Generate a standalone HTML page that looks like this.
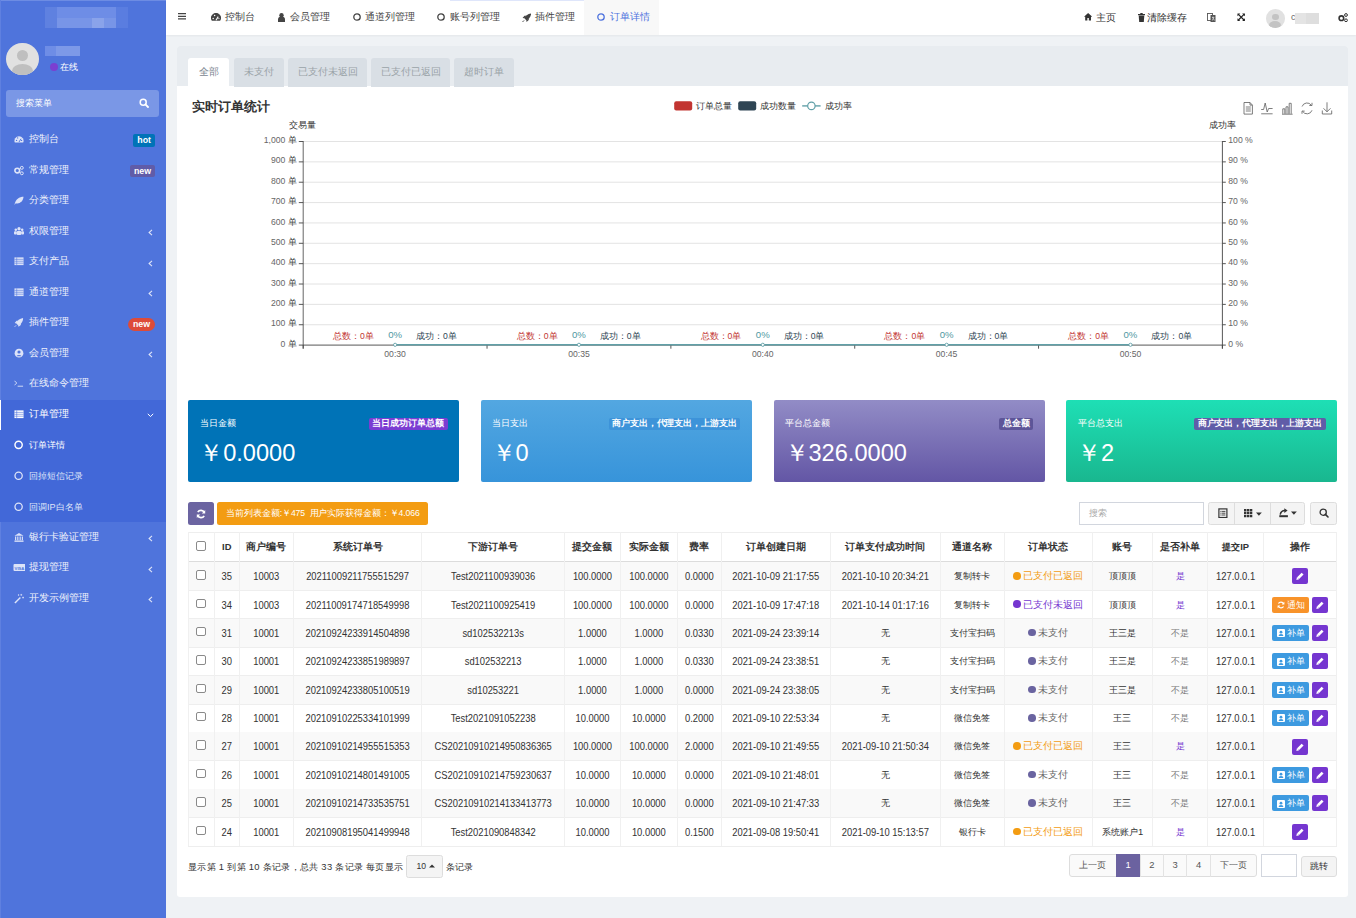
<!DOCTYPE html>
<html><head><meta charset="utf-8"><title>订单详情</title>
<style>
*{box-sizing:border-box;margin:0;padding:0}
html,body{width:1356px;height:918px;overflow:hidden}
body{position:relative;background:#eff2f5;font-family:"Liberation Sans",sans-serif;color:#333;font-size:9.4px}
.abs{position:absolute}
/* sidebar */
#side{left:0;top:0;width:166px;height:918px;background:#4f74dc}
.mos{position:absolute}
.menu .it{position:absolute;left:0;width:166px;height:30.5px;color:#eef1fb;font-size:9.5px;line-height:30.5px}
.menu .it .ic{position:absolute;left:14.3px;top:0.2px;width:10px;height:30.5px}
.menu .it .tx{position:absolute;left:29px;top:0}
.menu .it .chev{position:absolute;left:147.5px;top:2px;font-size:11px;color:#e3e8f8}
.badge{position:absolute;right:11px;top:10px;height:12.2px;line-height:12.2px;padding:0 4px;border-radius:2px;font-weight:bold;color:#fff;font-size:8.8px}
/* navbar */
#nav{left:166px;top:0;width:1190px;height:34.6px;background:#fff;box-shadow:0 1px 2px rgba(0,0,0,.05)}
.ni{position:absolute;top:0;height:35px;line-height:34px;font-size:9.5px;color:#444;white-space:nowrap}
.tab{position:absolute;top:58px;height:28.5px;line-height:28.3px;text-align:center;background:#d9dfe5;color:#99a3a8;font-size:9.7px;border-radius:3px 3px 0 0}
.tab.act{background:#fff;color:#7b8590}
.card{position:absolute;top:400.4px;width:271px;height:82px;border-radius:2px;color:#fff}
.card .cl{position:absolute;left:11.5px;top:16.5px;font-size:8.64px;line-height:13px}
.card .cb{position:absolute;right:11.5px;top:18px;height:11.8px;line-height:11.8px;padding:0 3.5px;font-size:8.64px;font-weight:bold;border-radius:2px}
.card .cv{position:absolute;left:11px;top:38px;font-size:23.6px;line-height:30px}
.td{position:absolute;text-align:center;white-space:nowrap;font-size:9.4px;color:#333}
.lt{display:inline-block;transform:translateY(0.8px) scaleY(1.17)}
.cbx{position:absolute;width:9.6px;height:9.4px;border:1px solid #8a8a8a;border-radius:2px;background:#fff}
.dot{display:inline-block;width:7.6px;height:7.6px;border-radius:50%;margin-right:2.5px;vertical-align:-0.5px}
.ebtn{position:absolute;width:16px;height:16px;background:#7536d0;border-radius:2px}
.ebtn svg{position:absolute;left:0;top:0}
.nbtn{position:absolute;width:36.5px;height:16px;border-radius:2px;color:#fff;font-size:9px;line-height:16px}
</style></head><body>

<!-- SIDEBAR -->
<div id="side" class="abs">
  <div class="abs" style="left:0;top:0;width:166px;height:1px;background:#6d8ce3"></div>
  <div class="abs" style="left:0;top:0;width:1px;height:918px;background:#5f80e0"></div>
  <!-- mosaic logo -->
  <div class="mos" style="left:45px;top:7px;width:83px;height:21px;background:#5f81e0"></div>
  <div class="mos" style="left:57px;top:7px;width:59px;height:11px;background:#6e8de6"></div>
  <div class="mos" style="left:57px;top:18px;width:59px;height:10px;background:#7895e7"></div>
  <div class="mos" style="left:92px;top:18px;width:12px;height:10px;background:#8aa3ea"></div>
  <div class="mos" style="left:116px;top:7px;width:12px;height:21px;background:#5a7de0"></div>
  <!-- user -->
  <div class="abs" style="left:6px;top:42.5px;width:32.6px;height:32.6px;border-radius:50%;background:#e1e1e1;overflow:hidden">
    <div class="abs" style="left:10.6px;top:7.6px;width:11.4px;height:11.4px;border-radius:50%;background:#bfbfbf"></div>
    <div class="abs" style="left:5.5px;top:21px;width:21.6px;height:14px;border-radius:50%;background:#bfbfbf"></div>
  </div>
  <div class="mos" style="left:45px;top:46px;width:35px;height:10px;background:#6e8de6"></div>
  <div class="mos" style="left:56px;top:46px;width:24px;height:10px;background:#7d99e8"></div>
  <div class="abs" style="left:49.5px;top:63px;width:8px;height:8px;border-radius:50%;background:#7b3fd1"></div>
  <div class="abs" style="left:60px;top:60px;font-size:9.4px;color:#fff;line-height:14px">在线</div>
  <!-- search -->
  <div class="abs" style="left:6px;top:90px;width:153px;height:26.6px;border-radius:3px;background:#7a97e6"></div>
  <div class="abs" style="left:16px;top:90px;height:26.6px;line-height:26.6px;font-size:8.8px;color:#fff">搜索菜单</div>
  <svg class="abs" style="left:139px;top:98px" width="10" height="10" viewBox="0 0 10 10"><circle cx="4.2" cy="4.2" r="3" fill="none" stroke="#fff" stroke-width="1.5"/><path d="M6.4 6.4L9 9" stroke="#fff" stroke-width="1.8" stroke-linecap="round"/></svg>

  <div class="menu">
    <div class="abs" style="left:0;top:399.5px;width:166px;height:122.5px;background:#4268d8"></div>
    <div class="abs" style="left:0;top:399.5px;width:1px;height:30.2px;background:#fff"></div>
    <div class="it" style="top:124.2px"><svg class="ic" viewBox="0 0 11 30.5"><path d="M0.9 18.8A5 5 0 1 1 10.1 18.8z" fill="#dce3f8"/><path d="M5.5 18.3l2.2-3.6" stroke="#4f74dc" stroke-width="1"/><circle cx="2.8" cy="16.5" r=".75" fill="#4f74dc"/><circle cx="4" cy="13.8" r=".75" fill="#4f74dc"/><circle cx="8.3" cy="16.5" r=".75" fill="#4f74dc"/></svg><span class="tx">控制台</span><span class="badge" style="background:#0073b7;top:10.2px">hot</span></div>
    <div class="it" style="top:154.7px"><svg class="ic" viewBox="0 0 11 30.5"><circle cx="3.6" cy="15.6" r="2.6" fill="none" stroke="#dce3f8" stroke-width="1.8"/><circle cx="8.6" cy="12.6" r="1.6" fill="none" stroke="#dce3f8" stroke-width="1.1"/><circle cx="8.6" cy="18.6" r="1.6" fill="none" stroke="#dce3f8" stroke-width="1.1"/></svg><span class="tx">常规管理</span><span class="badge" style="background:#605ca8;top:10.2px">new</span></div>
    <div class="it" style="top:185.2px"><svg class="ic" viewBox="0 0 11 30.5"><path d="M0.5 20.5C1.5 14 6 11.5 10.5 11.5C10 17 6 19.5 2 18.5" fill="#dce3f8"/></svg><span class="tx">分类管理</span></div>
    <div class="it" style="top:215.7px"><svg class="ic" viewBox="0 0 11 30.5"><circle cx="5.5" cy="12.5" r="1.8" fill="#dce3f8"/><circle cx="2" cy="13.5" r="1.4" fill="#dce3f8"/><circle cx="9" cy="13.5" r="1.4" fill="#dce3f8"/><rect x="2.8" y="15" width="5.4" height="4.5" rx="1.5" fill="#dce3f8"/><rect x="0" y="15.3" width="3" height="3.5" rx="1" fill="#dce3f8"/><rect x="8" y="15.3" width="3" height="3.5" rx="1" fill="#dce3f8"/></svg><span class="tx">权限管理</span><svg class="abs" style="left:148px;top:13.6px" width="5" height="7" viewBox="0 0 5 7"><path d="M4 0.9L1.1 3.5 4 6.1" fill="none" stroke="#dfe5f8" stroke-width="1.1"/></svg></div>
    <div class="it" style="top:246.2px"><svg class="ic" viewBox="0 0 11 30.5"><rect x="0.5" y="11" width="10" height="8.5" fill="#dce3f8"/><path d="M0.5 13.2h10M0.5 15.3h10M0.5 17.4h10M3 11v8.5" stroke="#4f74dc" stroke-width=".6"/></svg><span class="tx">支付产品</span><svg class="abs" style="left:148px;top:13.6px" width="5" height="7" viewBox="0 0 5 7"><path d="M4 0.9L1.1 3.5 4 6.1" fill="none" stroke="#dfe5f8" stroke-width="1.1"/></svg></div>
    <div class="it" style="top:276.7px"><svg class="ic" viewBox="0 0 11 30.5"><rect x="0.5" y="11" width="10" height="8.5" fill="#dce3f8"/><path d="M0.5 13.2h10M0.5 15.3h10M0.5 17.4h10M3 11v8.5" stroke="#4f74dc" stroke-width=".6"/></svg><span class="tx">通道管理</span><svg class="abs" style="left:148px;top:13.6px" width="5" height="7" viewBox="0 0 5 7"><path d="M4 0.9L1.1 3.5 4 6.1" fill="none" stroke="#dfe5f8" stroke-width="1.1"/></svg></div>
    <div class="it" style="top:307.2px"><svg class="ic" viewBox="0 0 11 30.5"><path d="M10 10.5C6 11 3.5 13.5 2.5 16.5L4.5 18.5C7.5 17.5 10 15 10 10.5z" fill="#dce3f8"/><path d="M2.5 16.5L0.8 16l2-2.5h2zM4.5 18.5L5 20.2l2.5-2v-2z" fill="#dce3f8"/><path d="M2.3 18.7L0.8 20.2" stroke="#dce3f8" stroke-width="1"/></svg><span class="tx">插件管理</span><span class="badge" style="background:#dd4b39;top:11px;border-radius:6.5px;padding:0 5px;height:12.9px;line-height:12.9px">new</span></div>
    <div class="it" style="top:337.7px"><svg class="ic" viewBox="0 0 11 30.5"><circle cx="5.5" cy="15.2" r="4.8" fill="#dce3f8"/><circle cx="5.5" cy="13.8" r="1.7" fill="#4f74dc"/><path d="M2.6 18.6a3.2 2.6 0 0 1 5.8 0" fill="#4f74dc"/></svg><span class="tx">会员管理</span><svg class="abs" style="left:148px;top:13.6px" width="5" height="7" viewBox="0 0 5 7"><path d="M4 0.9L1.1 3.5 4 6.1" fill="none" stroke="#dfe5f8" stroke-width="1.1"/></svg></div>
    <div class="it" style="top:368.2px"><svg class="ic" viewBox="0 0 11 30.5"><path d="M0.5 12.5l2.5 2.5-2.5 2.5" fill="none" stroke="#dce3f8" stroke-width="1"/><path d="M4 18.5h6" stroke="#dce3f8" stroke-width="1"/></svg><span class="tx">在线命令管理</span></div>
    <div class="it" style="top:398.7px;color:#fff"><svg class="ic" viewBox="0 0 11 30.5"><rect x="0.5" y="11" width="10" height="8.5" fill="#fff"/><path d="M0.5 13.2h10M0.5 15.3h10M0.5 17.4h10M3 11v8.5" stroke="#4268d8" stroke-width=".6"/></svg><span class="tx">订单管理</span><svg class="abs" style="left:146.6px;top:14.4px" width="7" height="5" viewBox="0 0 7 5"><path d="M0.8 0.8L3.5 3.6L6.2 0.8" fill="none" stroke="#fff" stroke-width="1"/></svg></div>
    <div class="it" style="top:430.2px;color:#fff;font-size:9.1px"><svg class="ic" viewBox="0 0 11 30.5"><circle cx="5.06" cy="14.8" r="4" fill="none" stroke="#fff" stroke-width="1.6"/></svg><span class="tx">订单详情</span></div>
    <div class="it" style="top:461px;color:#dfe5f8;font-size:9.1px"><svg class="ic" viewBox="0 0 11 30.5"><circle cx="5.06" cy="14.8" r="4" fill="none" stroke="#dfe5f8" stroke-width="1.4"/></svg><span class="tx">回掉短信记录</span></div>
    <div class="it" style="top:491.8px;color:#dfe5f8;font-size:9.1px"><svg class="ic" viewBox="0 0 11 30.5"><circle cx="5.06" cy="14.8" r="4" fill="none" stroke="#dfe5f8" stroke-width="1.4"/></svg><span class="tx">回调IP白名单</span></div>
    <div class="it" style="top:521.5px"><svg class="ic" viewBox="0 0 11 30.5"><path d="M0.5 13.5L5.5 10.5L10.5 13.5z" fill="#dce3f8"/><path d="M1.8 14.3v4.3M4.2 14.3v4.3M6.8 14.3v4.3M9.2 14.3v4.3" stroke="#dce3f8" stroke-width="1.3"/><rect x="0.5" y="18.8" width="10" height="1.5" fill="#dce3f8"/></svg><span class="tx">银行卡验证管理</span><svg class="abs" style="left:148px;top:13.6px" width="5" height="7" viewBox="0 0 5 7"><path d="M4 0.9L1.1 3.5 4 6.1" fill="none" stroke="#dfe5f8" stroke-width="1.1"/></svg></div>
    <div class="it" style="top:552px"><svg class="ic" viewBox="0 0 11 30.5" style="width:12px;left:13px"><rect x="0" y="12" width="12" height="7" rx="1" fill="#dce3f8"/><text x="6" y="17.6" font-size="4.2" text-anchor="middle" fill="#4f74dc" font-weight="bold" font-family="Liberation Sans">VISA</text></svg><span class="tx">提现管理</span><svg class="abs" style="left:148px;top:13.6px" width="5" height="7" viewBox="0 0 5 7"><path d="M4 0.9L1.1 3.5 4 6.1" fill="none" stroke="#dfe5f8" stroke-width="1.1"/></svg></div>
    <div class="it" style="top:582.5px"><svg class="ic" viewBox="0 0 11 30.5"><path d="M1 20.5L7 14.5" stroke="#dce3f8" stroke-width="1.6"/><path d="M8 10.5v2M7 11.5h2M10 13.5v2M9 14.5h2M5 11v1.4M4.3 11.7h1.4" stroke="#dce3f8" stroke-width=".8"/></svg><span class="tx">开发示例管理</span><svg class="abs" style="left:148px;top:13.6px" width="5" height="7" viewBox="0 0 5 7"><path d="M4 0.9L1.1 3.5 4 6.1" fill="none" stroke="#dfe5f8" stroke-width="1.1"/></svg></div>
  </div>
</div>

<!-- NAVBAR -->
<div id="nav" class="abs">
  <div class="abs" style="left:284px;top:0;width:166px;height:1px;background:#dfe6fb"></div>
  <svg class="abs" style="left:12px;top:13.3px" width="8.4" height="6.6" viewBox="0 0 8.4 6.6"><path d="M0 0.65h8.4M0 3.3h8.4M0 5.95h8.4" stroke="#444" stroke-width="1.3"/></svg>
  <svg class="abs" style="left:44.9px;top:13px" width="10" height="8" viewBox="0 0 10 8"><path d="M0.85 7.8A5 5 0 1 1 9.15 7.8z" fill="#444"/><path d="M5 7.2l2.2-3.6" stroke="#fff" stroke-width="1.1"/><circle cx="2.2" cy="5.4" r=".75" fill="#fff"/><circle cx="3.6" cy="2.6" r=".75" fill="#fff"/><circle cx="7.9" cy="5.6" r=".6" fill="#fff"/></svg>
  <div class="ni" style="left:58.6px">控制台</div>
  <svg class="abs" style="left:111.9px;top:12.6px" width="7" height="9" viewBox="0 0 7 9"><circle cx="3.5" cy="2.2" r="2.2" fill="#444"/><path d="M0 9v-2.5a3.5 3 0 0 1 7 0v2.5z" fill="#444"/></svg>
  <div class="ni" style="left:124.4px">会员管理</div>
  <svg class="abs" style="left:186.6px;top:13px" width="8" height="8" viewBox="0 0 8 8"><circle cx="4" cy="4" r="3.2" fill="none" stroke="#444" stroke-width="1.3"/></svg>
  <div class="ni" style="left:199.1px">通道列管理</div>
  <svg class="abs" style="left:271.1px;top:13px" width="8" height="8" viewBox="0 0 8 8"><circle cx="4" cy="4" r="3.2" fill="none" stroke="#444" stroke-width="1.3"/></svg>
  <div class="ni" style="left:283.9px">账号列管理</div>
  <svg class="abs" style="left:355.8px;top:12.5px" width="9.5" height="9.5" viewBox="0 0 10 10"><path d="M9.6 0.4C6 0.6 3.5 3 2.5 5.5L4.5 7.5C7 6.5 9.4 4 9.6 0.4z" fill="#444"/><path d="M2.5 5.5L0.6 5.2l2-2.3h2zM4.5 7.5L4.8 9.4l2.3-2v-2z" fill="#444"/><path d="M2.2 7.8L0.5 9.5" stroke="#444" stroke-width="1"/></svg>
  <div class="ni" style="left:368.9px">插件管理</div>
  <div class="abs" style="left:418.1px;top:0;width:74.5px;height:34.6px;background:#f8f8f8"></div>
  <svg class="abs" style="left:431.2px;top:13px" width="8" height="8" viewBox="0 0 8 8"><circle cx="4" cy="4" r="3.2" fill="none" stroke="#4d72de" stroke-width="1.3"/></svg>
  <div class="ni" style="left:443.7px;color:#4d72de">订单详情</div>

  <svg class="abs" style="left:918.3px;top:13px" width="8.2" height="7.5" viewBox="0 0 9 8"><path d="M4.5 0L0 4h1.3v4h2.4v-2.5h1.6v2.5h2.4v-4h1.3z" fill="#333"/></svg>
  <div class="ni" style="left:930.2px;top:1px;color:#333">主页</div>
  <svg class="abs" style="left:971.5px;top:12.5px" width="7" height="9" viewBox="0 0 7 9"><rect x="0" y="1" width="7" height="1.2" fill="#333"/><rect x="2.3" y="0" width="2.4" height="1.2" fill="#333"/><path d="M0.7 2.6h5.6l-.5 6.4h-4.6z" fill="#333"/></svg>
  <div class="ni" style="left:980.8px;top:1px;color:#333">清除缓存</div>
  <svg class="abs" style="left:1040.5px;top:12.5px" width="9" height="9" viewBox="0 0 9 9"><rect x="0.5" y="0.5" width="5" height="7" fill="#fff" stroke="#555" stroke-width=".9"/><rect x="3.5" y="2" width="5" height="7" fill="#555"/><path d="M5 4.5h2.3M6 3.5v1M5.3 7.5l1-2.3 1 2.3" stroke="#fff" stroke-width=".6" fill="none"/></svg>
  <svg class="abs" style="left:1070.6px;top:12.8px" width="8.4" height="8.4" viewBox="0 0 9 9"><path d="M0.5 0.5h3l-3 3zM8.5 0.5v3l-3-3zM0.5 8.5v-3l3 3zM8.5 8.5h-3l3-3z" fill="#222"/><path d="M1.5 1.5l6 6M7.5 1.5l-6 6" stroke="#222" stroke-width="1.3"/></svg>
  <div class="abs" style="left:1100px;top:9.3px;width:18.6px;height:18.6px;border-radius:50%;background:#e1e1e1;overflow:hidden">
    <div class="abs" style="left:6px;top:4.3px;width:6.6px;height:6.6px;border-radius:50%;background:#c3c3c3"></div>
    <div class="abs" style="left:3.3px;top:12.2px;width:12px;height:8px;border-radius:50%;background:#c3c3c3"></div>
  </div>
  <div class="ni" style="left:1125px;color:#666;font-size:9px">c</div>
  <div class="abs" style="left:1128.9px;top:12.8px;width:23.7px;height:11.6px;background:#e4e4e4"></div>
  <div class="abs" style="left:1140px;top:12.8px;width:12.6px;height:11.6px;background:#dedede"></div>
  <svg class="abs" style="left:1172px;top:12.7px" width="10" height="9" viewBox="0 0 10 9"><circle cx="3.4" cy="5.2" r="2.3" fill="none" stroke="#333" stroke-width="1.6"/><circle cx="8" cy="2" r="1.4" fill="none" stroke="#333" stroke-width="1"/><circle cx="8" cy="7.3" r="1.4" fill="none" stroke="#333" stroke-width="1"/></svg>
</div>

<!-- CONTENT -->
<!--CONTENT_START-->
<div class="abs" style="left:177px;top:46.2px;width:1171px;height:850.8px;background:#fff;border-radius:3px"></div>
<div class="abs" style="left:177px;top:46.2px;width:1171px;height:40.3px;background:#e8ecf0;border-radius:3px 3px 0 0"></div>
<div class="tab act" style="left:188.4px;width:40.6px">全部</div>
<div class="tab" style="left:233.8px;width:50.1px">未支付</div>
<div class="tab" style="left:288px;width:79px">已支付未返回</div>
<div class="tab" style="left:371px;width:79px">已支付已返回</div>
<div class="tab" style="left:454px;width:60px">超时订单</div>
<div class="abs" style="left:191.5px;top:98px;font-size:13px;font-weight:bold;color:#333;line-height:17px">实时订单统计</div>
<svg class="abs" style="left:0;top:0" width="1356" height="918" viewBox="0 0 1356 918" font-family="Liberation Sans, sans-serif">
<line x1="303.2" y1="324.74" x2="1222.4" y2="324.74" stroke="#dcdcdc" stroke-width="0.8"/>
<line x1="303.2" y1="304.38" x2="1222.4" y2="304.38" stroke="#dcdcdc" stroke-width="0.8"/>
<line x1="303.2" y1="284.02" x2="1222.4" y2="284.02" stroke="#dcdcdc" stroke-width="0.8"/>
<line x1="303.2" y1="263.66" x2="1222.4" y2="263.66" stroke="#dcdcdc" stroke-width="0.8"/>
<line x1="303.2" y1="243.30" x2="1222.4" y2="243.30" stroke="#dcdcdc" stroke-width="0.8"/>
<line x1="303.2" y1="222.94" x2="1222.4" y2="222.94" stroke="#dcdcdc" stroke-width="0.8"/>
<line x1="303.2" y1="202.58" x2="1222.4" y2="202.58" stroke="#dcdcdc" stroke-width="0.8"/>
<line x1="303.2" y1="182.22" x2="1222.4" y2="182.22" stroke="#dcdcdc" stroke-width="0.8"/>
<line x1="303.2" y1="161.86" x2="1222.4" y2="161.86" stroke="#dcdcdc" stroke-width="0.8"/>
<line x1="303.2" y1="141.50" x2="1222.4" y2="141.50" stroke="#dcdcdc" stroke-width="0.8"/>
<line x1="303.2" y1="141.0" x2="303.2" y2="348.6" stroke="#555" stroke-width="0.9"/>
<line x1="1222.4" y1="141.0" x2="1222.4" y2="348.6" stroke="#444" stroke-width="0.9"/>
<line x1="303.2" y1="345.1" x2="1222.4" y2="345.1" stroke="#444" stroke-width="0.9"/>
<line x1="298.8" y1="345.10" x2="303.2" y2="345.10" stroke="#444" stroke-width="0.9"/>
<line x1="1222.4" y1="345.10" x2="1225.8000000000002" y2="345.10" stroke="#444" stroke-width="0.9"/>
<text x="296.8" y="343.70" font-size="8.64" fill="#666" text-anchor="end" dominant-baseline="central">0 <tspan fill="#444">单</tspan></text>
<text x="1228.3" y="343.70" font-size="8.64" fill="#666" dominant-baseline="central">0 %</text>
<line x1="298.8" y1="324.74" x2="303.2" y2="324.74" stroke="#444" stroke-width="0.9"/>
<line x1="1222.4" y1="324.74" x2="1225.8000000000002" y2="324.74" stroke="#444" stroke-width="0.9"/>
<text x="296.8" y="323.34" font-size="8.64" fill="#666" text-anchor="end" dominant-baseline="central">100 <tspan fill="#444">单</tspan></text>
<text x="1228.3" y="323.34" font-size="8.64" fill="#666" dominant-baseline="central">10 %</text>
<line x1="298.8" y1="304.38" x2="303.2" y2="304.38" stroke="#444" stroke-width="0.9"/>
<line x1="1222.4" y1="304.38" x2="1225.8000000000002" y2="304.38" stroke="#444" stroke-width="0.9"/>
<text x="296.8" y="302.98" font-size="8.64" fill="#666" text-anchor="end" dominant-baseline="central">200 <tspan fill="#444">单</tspan></text>
<text x="1228.3" y="302.98" font-size="8.64" fill="#666" dominant-baseline="central">20 %</text>
<line x1="298.8" y1="284.02" x2="303.2" y2="284.02" stroke="#444" stroke-width="0.9"/>
<line x1="1222.4" y1="284.02" x2="1225.8000000000002" y2="284.02" stroke="#444" stroke-width="0.9"/>
<text x="296.8" y="282.62" font-size="8.64" fill="#666" text-anchor="end" dominant-baseline="central">300 <tspan fill="#444">单</tspan></text>
<text x="1228.3" y="282.62" font-size="8.64" fill="#666" dominant-baseline="central">30 %</text>
<line x1="298.8" y1="263.66" x2="303.2" y2="263.66" stroke="#444" stroke-width="0.9"/>
<line x1="1222.4" y1="263.66" x2="1225.8000000000002" y2="263.66" stroke="#444" stroke-width="0.9"/>
<text x="296.8" y="262.26" font-size="8.64" fill="#666" text-anchor="end" dominant-baseline="central">400 <tspan fill="#444">单</tspan></text>
<text x="1228.3" y="262.26" font-size="8.64" fill="#666" dominant-baseline="central">40 %</text>
<line x1="298.8" y1="243.30" x2="303.2" y2="243.30" stroke="#444" stroke-width="0.9"/>
<line x1="1222.4" y1="243.30" x2="1225.8000000000002" y2="243.30" stroke="#444" stroke-width="0.9"/>
<text x="296.8" y="241.90" font-size="8.64" fill="#666" text-anchor="end" dominant-baseline="central">500 <tspan fill="#444">单</tspan></text>
<text x="1228.3" y="241.90" font-size="8.64" fill="#666" dominant-baseline="central">50 %</text>
<line x1="298.8" y1="222.94" x2="303.2" y2="222.94" stroke="#444" stroke-width="0.9"/>
<line x1="1222.4" y1="222.94" x2="1225.8000000000002" y2="222.94" stroke="#444" stroke-width="0.9"/>
<text x="296.8" y="221.54" font-size="8.64" fill="#666" text-anchor="end" dominant-baseline="central">600 <tspan fill="#444">单</tspan></text>
<text x="1228.3" y="221.54" font-size="8.64" fill="#666" dominant-baseline="central">60 %</text>
<line x1="298.8" y1="202.58" x2="303.2" y2="202.58" stroke="#444" stroke-width="0.9"/>
<line x1="1222.4" y1="202.58" x2="1225.8000000000002" y2="202.58" stroke="#444" stroke-width="0.9"/>
<text x="296.8" y="201.18" font-size="8.64" fill="#666" text-anchor="end" dominant-baseline="central">700 <tspan fill="#444">单</tspan></text>
<text x="1228.3" y="201.18" font-size="8.64" fill="#666" dominant-baseline="central">70 %</text>
<line x1="298.8" y1="182.22" x2="303.2" y2="182.22" stroke="#444" stroke-width="0.9"/>
<line x1="1222.4" y1="182.22" x2="1225.8000000000002" y2="182.22" stroke="#444" stroke-width="0.9"/>
<text x="296.8" y="180.82" font-size="8.64" fill="#666" text-anchor="end" dominant-baseline="central">800 <tspan fill="#444">单</tspan></text>
<text x="1228.3" y="180.82" font-size="8.64" fill="#666" dominant-baseline="central">80 %</text>
<line x1="298.8" y1="161.86" x2="303.2" y2="161.86" stroke="#444" stroke-width="0.9"/>
<line x1="1222.4" y1="161.86" x2="1225.8000000000002" y2="161.86" stroke="#444" stroke-width="0.9"/>
<text x="296.8" y="160.46" font-size="8.64" fill="#666" text-anchor="end" dominant-baseline="central">900 <tspan fill="#444">单</tspan></text>
<text x="1228.3" y="160.46" font-size="8.64" fill="#666" dominant-baseline="central">90 %</text>
<line x1="298.8" y1="141.50" x2="303.2" y2="141.50" stroke="#444" stroke-width="0.9"/>
<line x1="1222.4" y1="141.50" x2="1225.8000000000002" y2="141.50" stroke="#444" stroke-width="0.9"/>
<text x="296.8" y="140.10" font-size="8.64" fill="#666" text-anchor="end" dominant-baseline="central">1,000 <tspan fill="#444">单</tspan></text>
<text x="1228.3" y="140.10" font-size="8.64" fill="#666" dominant-baseline="central">100 %</text>
<text x="302.7" y="125" font-size="8.64" fill="#333" text-anchor="middle" dominant-baseline="central">交易量</text>
<text x="1222" y="125" font-size="8.64" fill="#333" text-anchor="middle" dominant-baseline="central">成功率</text>
<line x1="303.20" y1="345.1" x2="303.20" y2="348.70000000000005" stroke="#444" stroke-width="0.9"/>
<line x1="487.04" y1="345.1" x2="487.04" y2="348.70000000000005" stroke="#444" stroke-width="0.9"/>
<line x1="670.88" y1="345.1" x2="670.88" y2="348.70000000000005" stroke="#444" stroke-width="0.9"/>
<line x1="854.72" y1="345.1" x2="854.72" y2="348.70000000000005" stroke="#444" stroke-width="0.9"/>
<line x1="1038.56" y1="345.1" x2="1038.56" y2="348.70000000000005" stroke="#444" stroke-width="0.9"/>
<line x1="1222.40" y1="345.1" x2="1222.40" y2="348.70000000000005" stroke="#444" stroke-width="0.9"/>
<line x1="395.12" y1="344.8" x2="1130.48" y2="344.8" stroke="#61a0a8" stroke-width="1.6"/>
<text x="395.12" y="354.2" font-size="8.64" fill="#666" text-anchor="middle" dominant-baseline="central">00:30</text>
<circle cx="395.12" cy="344.8" r="1.6" fill="#fff" stroke="#61a0a8" stroke-width="0.9"/>
<text x="395.12" y="334.8" font-size="9.6" fill="#4f98a2" text-anchor="middle" dominant-baseline="central">0%</text>
<text x="353.32" y="335.7" font-size="8.64" fill="#c23531" text-anchor="middle" dominant-baseline="central">总数：0单</text>
<text x="436.42" y="335.7" font-size="8.64" fill="#2f4554" text-anchor="middle" dominant-baseline="central">成功：0单</text>
<text x="578.96" y="354.2" font-size="8.64" fill="#666" text-anchor="middle" dominant-baseline="central">00:35</text>
<circle cx="578.96" cy="344.8" r="1.6" fill="#fff" stroke="#61a0a8" stroke-width="0.9"/>
<text x="578.96" y="334.8" font-size="9.6" fill="#4f98a2" text-anchor="middle" dominant-baseline="central">0%</text>
<text x="537.16" y="335.7" font-size="8.64" fill="#c23531" text-anchor="middle" dominant-baseline="central">总数：0单</text>
<text x="620.26" y="335.7" font-size="8.64" fill="#2f4554" text-anchor="middle" dominant-baseline="central">成功：0单</text>
<text x="762.80" y="354.2" font-size="8.64" fill="#666" text-anchor="middle" dominant-baseline="central">00:40</text>
<circle cx="762.80" cy="344.8" r="1.6" fill="#fff" stroke="#61a0a8" stroke-width="0.9"/>
<text x="762.80" y="334.8" font-size="9.6" fill="#4f98a2" text-anchor="middle" dominant-baseline="central">0%</text>
<text x="721.00" y="335.7" font-size="8.64" fill="#c23531" text-anchor="middle" dominant-baseline="central">总数：0单</text>
<text x="804.10" y="335.7" font-size="8.64" fill="#2f4554" text-anchor="middle" dominant-baseline="central">成功：0单</text>
<text x="946.64" y="354.2" font-size="8.64" fill="#666" text-anchor="middle" dominant-baseline="central">00:45</text>
<circle cx="946.64" cy="344.8" r="1.6" fill="#fff" stroke="#61a0a8" stroke-width="0.9"/>
<text x="946.64" y="334.8" font-size="9.6" fill="#4f98a2" text-anchor="middle" dominant-baseline="central">0%</text>
<text x="904.84" y="335.7" font-size="8.64" fill="#c23531" text-anchor="middle" dominant-baseline="central">总数：0单</text>
<text x="987.94" y="335.7" font-size="8.64" fill="#2f4554" text-anchor="middle" dominant-baseline="central">成功：0单</text>
<text x="1130.48" y="354.2" font-size="8.64" fill="#666" text-anchor="middle" dominant-baseline="central">00:50</text>
<circle cx="1130.48" cy="344.8" r="1.6" fill="#fff" stroke="#61a0a8" stroke-width="0.9"/>
<text x="1130.48" y="334.8" font-size="9.6" fill="#4f98a2" text-anchor="middle" dominant-baseline="central">0%</text>
<text x="1088.68" y="335.7" font-size="8.64" fill="#c23531" text-anchor="middle" dominant-baseline="central">总数：0单</text>
<text x="1171.78" y="335.7" font-size="8.64" fill="#2f4554" text-anchor="middle" dominant-baseline="central">成功：0单</text>
<rect x="674.2" y="101.2" width="18" height="9.4" rx="2" fill="#c23531"/>
<text x="696.4" y="105.9" font-size="8.64" fill="#333" dominant-baseline="central">订单总量</text>
<rect x="738.2" y="101.2" width="18" height="9.4" rx="2" fill="#2f4554"/>
<text x="760.4" y="105.9" font-size="8.64" fill="#333" dominant-baseline="central">成功数量</text>
<line x1="802.2" y1="105.9" x2="820.6" y2="105.9" stroke="#61a0a8" stroke-width="1.4"/>
<circle cx="811.4" cy="105.9" r="3.7" fill="#fff" stroke="#61a0a8" stroke-width="1.2"/>
<text x="824.5" y="105.9" font-size="8.64" fill="#333" dominant-baseline="central">成功率</text>
<path d="M1244 102.5h6l2.4 2.6v9h-8.4z M1250 102.5v2.6h2.4 M1245.8 107h5 M1245.8 109h5 M1245.8 111h5" fill="none" stroke="#666" stroke-width="0.85"/>
<path d="M1261.2 109.5h2.4l1.6-6.5 2 9 1.4-3.5h4 M1261.2 113.8h11.4" fill="none" stroke="#666" stroke-width="0.85"/>
<path d="M1282.8 113.8v-5h2v5 M1286 113.8v-7h2v7 M1289.2 113.8v-10.5h2v10.5 M1282 114.2h10.6" fill="none" stroke="#666" stroke-width="0.85"/>
<path d="M1311.3 105.2a5.2 5.2 0 0 0-9.2 1.3 M1302.6 111.3a5.2 5.2 0 0 0 9.4-1 M1312 102.8v2.7h-2.7 M1302 113.8v-2.7h2.7" fill="none" stroke="#666" stroke-width="0.85"/>
<path d="M1327 102.3v9.5 M1323.5 108.3l3.5 3.5 3.5-3.5 M1322.3 110.5v3.5h9.4v-3.5" fill="none" stroke="#666" stroke-width="0.85"/>
</svg><!-- stat cards -->
<div class="card" style="left:188.2px;background:#0073b7">
  <div class="cl">当日金额</div><div class="cb" style="background:#7b3dd2">当日成功订单总额</div><div class="cv">￥0.0000</div>
</div>
<div class="card" style="left:480.5px;background:linear-gradient(#53a7e1,#3794da)">
  <div class="cl">当日支出</div><div class="cb" style="background:#3d93d9;letter-spacing:-0.12px">商户支出，代理支出，上游支出</div><div class="cv">￥0</div>
</div>
<div class="card" style="left:773.5px;background:linear-gradient(#928cc6,#6356a5)">
  <div class="cl">平台总金额</div><div class="cb" style="background:#5d5598">总金额</div><div class="cv">￥326.0000</div>
</div>
<div class="card" style="left:1066px;background:linear-gradient(#1edfb5,#19b78f)">
  <div class="cl">平台总支出</div><div class="cb" style="background:#605ca8;letter-spacing:-0.12px">商户支出，代理支出，上游支出</div><div class="cv">￥2</div>
</div>
<!-- toolbar -->
<div class="abs" style="left:188px;top:502px;width:26px;height:23px;background:#6b64a1;border-radius:2.5px"></div>
<svg class="abs" style="left:196px;top:508.5px" width="10" height="10" viewBox="0 0 10 10"><path d="M8.3 3.6A3.6 3.6 0 0 0 1.8 3.2" fill="none" stroke="#fff" stroke-width="1.6"/><path d="M1.7 6.4A3.6 3.6 0 0 0 8.2 6.8" fill="none" stroke="#fff" stroke-width="1.6"/><path d="M9.2 1v3.4h-3.4zM0.8 9v-3.4h3.4z" fill="#fff"/></svg>
<div class="abs" style="left:217px;top:502px;width:211px;height:23px;background:#f39c12;border-radius:2.5px;color:#fff;font-size:8.64px;line-height:23px;padding-left:9.3px;white-space:nowrap;letter-spacing:-0.1px">当前列表金额:￥475&nbsp; 用户实际获得金额：￥4.066</div>
<div class="abs" style="left:1079px;top:502.4px;width:125px;height:22.3px;border:1px solid #d2d6de;background:#fff;color:#aaa;font-size:8.64px;line-height:20.3px;padding-left:8.5px">搜索</div>
<div class="abs" style="left:1207.5px;top:502.4px;width:97.8px;height:22.3px;border:1px solid #ddd;background:#f4f4f4;border-radius:2.5px"></div>
<div class="abs" style="left:1234px;top:502.4px;width:1px;height:22.3px;background:#ddd"></div>
<div class="abs" style="left:1270px;top:502.4px;width:1px;height:22.3px;background:#ddd"></div>
<svg class="abs" style="left:1217.5px;top:507.5px" width="10" height="10" viewBox="0 0 10 10"><rect x="0.9" y="0.9" width="8" height="8.6" fill="none" stroke="#333" stroke-width="1.2"/><path d="M2.4 3.4h5M2.4 5.2h5M2.4 7h5" stroke="#333" stroke-width=".9"/><path d="M3.6 2.6v5.2" stroke="#f4f4f4" stroke-width=".5"/></svg>
<svg class="abs" style="left:1244px;top:509px" width="19" height="8.5" viewBox="0 0 19 8.5"><path d="M0 0h2.4v2.4h-2.4zM2.95 0h2.4v2.4h-2.4zM5.9 0h2.4v2.4h-2.4zM0 2.95h2.4v2.4h-2.4zM2.95 2.95h2.4v2.4h-2.4zM5.9 2.95h2.4v2.4h-2.4zM0 5.9h2.4v2.4h-2.4zM2.95 5.9h2.4v2.4h-2.4zM5.9 5.9h2.4v2.4h-2.4z" fill="#333"/><path d="M12 3.6h5.8l-2.9 3.2z" fill="#333"/></svg>
<svg class="abs" style="left:1279px;top:508px" width="18" height="9.5" viewBox="0 0 18 9.5"><rect x="0.3" y="7.2" width="8.6" height="2" fill="#333"/><path d="M1.2 6.6C1.8 3.8 3.6 2.6 6 2.6" fill="none" stroke="#333" stroke-width="1.5"/><path d="M5.3 0.2L8.6 2.6 5.3 5z" fill="#333"/><path d="M12 3.6h5.8l-2.9 3.2z" fill="#333"/></svg>
<div class="abs" style="left:1309.5px;top:502.4px;width:27.3px;height:22.3px;border:1px solid #ddd;background:#f4f4f4;border-radius:2.5px"></div>
<svg class="abs" style="left:1318.5px;top:507.8px" width="10" height="10" viewBox="0 0 10 10"><circle cx="4.2" cy="4.2" r="3.1" fill="none" stroke="#333" stroke-width="1.3"/><path d="M6.4 6.4L9 9" stroke="#333" stroke-width="1.6" stroke-linecap="round"/></svg>
<div class="abs" style="left:188px;top:532.3px;width:1148.8px;height:1px;background:#eee"></div>
<div class="abs" style="left:188px;top:562.20px;width:1148.8px;height:28.38px;background:#f9f9f9"></div>
<div class="abs" style="left:188px;top:590.08px;width:1148.8px;height:1px;background:#eee"></div>
<div class="abs" style="left:188px;top:618.46px;width:1148.8px;height:1px;background:#eee"></div>
<div class="abs" style="left:188px;top:618.96px;width:1148.8px;height:28.38px;background:#f9f9f9"></div>
<div class="abs" style="left:188px;top:646.84px;width:1148.8px;height:1px;background:#eee"></div>
<div class="abs" style="left:188px;top:675.22px;width:1148.8px;height:1px;background:#eee"></div>
<div class="abs" style="left:188px;top:675.72px;width:1148.8px;height:28.38px;background:#f9f9f9"></div>
<div class="abs" style="left:188px;top:703.60px;width:1148.8px;height:1px;background:#eee"></div>
<div class="abs" style="left:188px;top:731.98px;width:1148.8px;height:1px;background:#eee"></div>
<div class="abs" style="left:188px;top:732.48px;width:1148.8px;height:28.38px;background:#f9f9f9"></div>
<div class="abs" style="left:188px;top:760.36px;width:1148.8px;height:1px;background:#eee"></div>
<div class="abs" style="left:188px;top:788.74px;width:1148.8px;height:1px;background:#eee"></div>
<div class="abs" style="left:188px;top:789.24px;width:1148.8px;height:28.38px;background:#f9f9f9"></div>
<div class="abs" style="left:188px;top:817.12px;width:1148.8px;height:1px;background:#eee"></div>
<div class="abs" style="left:188px;top:845.50px;width:1148.8px;height:1px;background:#eee"></div>
<div class="abs" style="left:188px;top:561.20px;width:1148.8px;height:1.3px;background:#dcdcdc"></div>
<div class="abs" style="left:187.5px;top:532.3px;width:1px;height:313.70px;background:#f0f0f0"></div>
<div class="abs" style="left:214.0px;top:532.3px;width:1px;height:313.70px;background:#f0f0f0"></div>
<div class="abs" style="left:238.5px;top:532.3px;width:1px;height:313.70px;background:#f0f0f0"></div>
<div class="abs" style="left:293.0px;top:532.3px;width:1px;height:313.70px;background:#f0f0f0"></div>
<div class="abs" style="left:421.2px;top:532.3px;width:1px;height:313.70px;background:#f0f0f0"></div>
<div class="abs" style="left:564.1px;top:532.3px;width:1px;height:313.70px;background:#f0f0f0"></div>
<div class="abs" style="left:619.8px;top:532.3px;width:1px;height:313.70px;background:#f0f0f0"></div>
<div class="abs" style="left:676.9px;top:532.3px;width:1px;height:313.70px;background:#f0f0f0"></div>
<div class="abs" style="left:720.7px;top:532.3px;width:1px;height:313.70px;background:#f0f0f0"></div>
<div class="abs" style="left:829.8px;top:532.3px;width:1px;height:313.70px;background:#f0f0f0"></div>
<div class="abs" style="left:939.9px;top:532.3px;width:1px;height:313.70px;background:#f0f0f0"></div>
<div class="abs" style="left:1003.6px;top:532.3px;width:1px;height:313.70px;background:#f0f0f0"></div>
<div class="abs" style="left:1091.9px;top:532.3px;width:1px;height:313.70px;background:#f0f0f0"></div>
<div class="abs" style="left:1152.1px;top:532.3px;width:1px;height:313.70px;background:#f0f0f0"></div>
<div class="abs" style="left:1207.2px;top:532.3px;width:1px;height:313.70px;background:#f0f0f0"></div>
<div class="abs" style="left:1263.0px;top:532.3px;width:1px;height:313.70px;background:#f0f0f0"></div>
<div class="abs" style="left:1336.3px;top:532.3px;width:1px;height:313.70px;background:#f0f0f0"></div>
<div class="cbx" style="left:196.4px;top:541.2px"></div>
<div class="td" style="left:214.5px;top:532.30px;width:24.5px;height:29.90px;line-height:29.90px;font-weight:bold;color:#333">ID</div>
<div class="td" style="left:239px;top:532.30px;width:54.5px;height:29.90px;line-height:29.90px;font-weight:bold;color:#333;font-size:9.5px">商户编号</div>
<div class="td" style="left:293.5px;top:532.30px;width:128.2px;height:29.90px;line-height:29.90px;font-weight:bold;color:#333;font-size:9.5px">系统订单号</div>
<div class="td" style="left:421.7px;top:532.30px;width:142.9px;height:29.90px;line-height:29.90px;font-weight:bold;color:#333;font-size:9.5px">下游订单号</div>
<div class="td" style="left:564.6px;top:532.30px;width:55.7px;height:29.90px;line-height:29.90px;font-weight:bold;color:#333;font-size:9.5px">提交金额</div>
<div class="td" style="left:620.3px;top:532.30px;width:57.1px;height:29.90px;line-height:29.90px;font-weight:bold;color:#333;font-size:9.5px">实际金额</div>
<div class="td" style="left:677.4px;top:532.30px;width:43.8px;height:29.90px;line-height:29.90px;font-weight:bold;color:#333;font-size:9.5px">费率</div>
<div class="td" style="left:721.2px;top:532.30px;width:109.1px;height:29.90px;line-height:29.90px;font-weight:bold;color:#333;font-size:9.5px">订单创建日期</div>
<div class="td" style="left:830.3px;top:532.30px;width:110.1px;height:29.90px;line-height:29.90px;font-weight:bold;color:#333;font-size:9.5px">订单支付成功时间</div>
<div class="td" style="left:940.4px;top:532.30px;width:63.7px;height:29.90px;line-height:29.90px;font-weight:bold;color:#333;font-size:9.5px">通道名称</div>
<div class="td" style="left:1004.1px;top:532.30px;width:88.3px;height:29.90px;line-height:29.90px;font-weight:bold;color:#333;font-size:9.5px">订单状态</div>
<div class="td" style="left:1092.4px;top:532.30px;width:60.2px;height:29.90px;line-height:29.90px;font-weight:bold;color:#333;font-size:9.5px">账号</div>
<div class="td" style="left:1152.6px;top:532.30px;width:55.1px;height:29.90px;line-height:29.90px;font-weight:bold;color:#333;font-size:9.5px">是否补单</div>
<div class="td" style="left:1207.7px;top:532.30px;width:55.8px;height:29.90px;line-height:29.90px;font-weight:bold;color:#333">提交IP</div>
<div class="td" style="left:1263.5px;top:532.30px;width:73.3px;height:29.90px;line-height:29.90px;font-weight:bold;color:#333;font-size:9.5px">操作</div>
<div class="cbx" style="left:196.4px;top:570.20px"></div>
<div class="td" style="left:214.5px;top:562.20px;width:24.5px;height:28.38px;line-height:28.38px;"><span class="lt">35</span></div>
<div class="td" style="left:239px;top:562.20px;width:54.5px;height:28.38px;line-height:28.38px;"><span class="lt">10003</span></div>
<div class="td" style="left:293.5px;top:562.20px;width:128.2px;height:28.38px;line-height:28.38px;"><span class="lt">20211009211755515297</span></div>
<div class="td" style="left:421.7px;top:562.20px;width:142.9px;height:28.38px;line-height:28.38px;"><span class="lt">Test2021100939036</span></div>
<div class="td" style="left:564.6px;top:562.20px;width:55.7px;height:28.38px;line-height:28.38px;"><span class="lt">100.0000</span></div>
<div class="td" style="left:620.3px;top:562.20px;width:57.1px;height:28.38px;line-height:28.38px;"><span class="lt">100.0000</span></div>
<div class="td" style="left:677.4px;top:562.20px;width:43.8px;height:28.38px;line-height:28.38px;"><span class="lt">0.0000</span></div>
<div class="td" style="left:721.2px;top:562.20px;width:109.1px;height:28.38px;line-height:28.38px;"><span class="lt">2021-10-09 21:17:55</span></div>
<div class="td" style="left:830.3px;top:562.20px;width:110.1px;height:28.38px;line-height:28.38px;"><span class="lt">2021-10-10 20:34:21</span></div>
<div class="td" style="left:940.4px;top:562.20px;width:63.7px;height:28.38px;line-height:28.38px;">复制转卡</div>
<div class="td" style="left:1004.1px;top:562.20px;width:88.3px;height:28.38px;line-height:28.38px;font-size:9.6px"><span class="dot" style="background:#f39c12"></span><span style="color:#f39c12">已支付已返回</span></div>
<div class="td" style="left:1092.4px;top:562.20px;width:60.2px;height:28.38px;line-height:28.38px;">顶顶顶</div>
<div class="td" style="left:1152.6px;top:562.20px;width:55.1px;height:28.38px;line-height:28.38px;color:#7536d0">是</div>
<div class="td" style="left:1207.7px;top:562.20px;width:55.8px;height:28.38px;line-height:28.38px;"><span class="lt">127.0.0.1</span></div>
<div class="ebtn" style="left:1292px;top:568.30px"><svg width="16" height="16" viewBox="0 0 16 16"><path d="M6.1 10.1L10.6 5.6" stroke="#fff" stroke-width="2.7"/><path d="M4.3 11.9l0.7-2.9 2.2 2.2z" fill="#fff"/></svg></div>
<div class="cbx" style="left:196.4px;top:598.58px"></div>
<div class="td" style="left:214.5px;top:590.58px;width:24.5px;height:28.38px;line-height:28.38px;"><span class="lt">34</span></div>
<div class="td" style="left:239px;top:590.58px;width:54.5px;height:28.38px;line-height:28.38px;"><span class="lt">10003</span></div>
<div class="td" style="left:293.5px;top:590.58px;width:128.2px;height:28.38px;line-height:28.38px;"><span class="lt">20211009174718549998</span></div>
<div class="td" style="left:421.7px;top:590.58px;width:142.9px;height:28.38px;line-height:28.38px;"><span class="lt">Test2021100925419</span></div>
<div class="td" style="left:564.6px;top:590.58px;width:55.7px;height:28.38px;line-height:28.38px;"><span class="lt">100.0000</span></div>
<div class="td" style="left:620.3px;top:590.58px;width:57.1px;height:28.38px;line-height:28.38px;"><span class="lt">100.0000</span></div>
<div class="td" style="left:677.4px;top:590.58px;width:43.8px;height:28.38px;line-height:28.38px;"><span class="lt">0.0000</span></div>
<div class="td" style="left:721.2px;top:590.58px;width:109.1px;height:28.38px;line-height:28.38px;"><span class="lt">2021-10-09 17:47:18</span></div>
<div class="td" style="left:830.3px;top:590.58px;width:110.1px;height:28.38px;line-height:28.38px;"><span class="lt">2021-10-14 01:17:16</span></div>
<div class="td" style="left:940.4px;top:590.58px;width:63.7px;height:28.38px;line-height:28.38px;">复制转卡</div>
<div class="td" style="left:1004.1px;top:590.58px;width:88.3px;height:28.38px;line-height:28.38px;font-size:9.6px"><span class="dot" style="background:#7536d0"></span><span style="color:#7536d0">已支付未返回</span></div>
<div class="td" style="left:1092.4px;top:590.58px;width:60.2px;height:28.38px;line-height:28.38px;">顶顶顶</div>
<div class="td" style="left:1152.6px;top:590.58px;width:55.1px;height:28.38px;line-height:28.38px;color:#7536d0">是</div>
<div class="td" style="left:1207.7px;top:590.58px;width:55.8px;height:28.38px;line-height:28.38px;"><span class="lt">127.0.0.1</span></div>
<div class="nbtn" style="left:1272.2px;top:596.68px;background:#f8932a"><svg width="8" height="8" viewBox="0 0 10 10" style="position:absolute;left:4.8px;top:4px"><path d="M8.3 3.6A3.6 3.6 0 0 0 1.8 3.2" fill="none" stroke="#fff" stroke-width="1.6"/><path d="M1.7 6.4A3.6 3.6 0 0 0 8.2 6.8" fill="none" stroke="#fff" stroke-width="1.6"/><path d="M9.2 1v3.4h-3.4zM0.8 9v-3.4h3.4z" fill="#fff"/></svg><span style="position:absolute;left:14.4px;top:0">通知</span></div>
<div class="ebtn" style="left:1312.2px;top:596.68px"><svg width="16" height="16" viewBox="0 0 16 16"><path d="M6.1 10.1L10.6 5.6" stroke="#fff" stroke-width="2.7"/><path d="M4.3 11.9l0.7-2.9 2.2 2.2z" fill="#fff"/></svg></div>
<div class="cbx" style="left:196.4px;top:626.96px"></div>
<div class="td" style="left:214.5px;top:618.96px;width:24.5px;height:28.38px;line-height:28.38px;"><span class="lt">31</span></div>
<div class="td" style="left:239px;top:618.96px;width:54.5px;height:28.38px;line-height:28.38px;"><span class="lt">10001</span></div>
<div class="td" style="left:293.5px;top:618.96px;width:128.2px;height:28.38px;line-height:28.38px;"><span class="lt">20210924233914504898</span></div>
<div class="td" style="left:421.7px;top:618.96px;width:142.9px;height:28.38px;line-height:28.38px;"><span class="lt">sd102532213s</span></div>
<div class="td" style="left:564.6px;top:618.96px;width:55.7px;height:28.38px;line-height:28.38px;"><span class="lt">1.0000</span></div>
<div class="td" style="left:620.3px;top:618.96px;width:57.1px;height:28.38px;line-height:28.38px;"><span class="lt">1.0000</span></div>
<div class="td" style="left:677.4px;top:618.96px;width:43.8px;height:28.38px;line-height:28.38px;"><span class="lt">0.0330</span></div>
<div class="td" style="left:721.2px;top:618.96px;width:109.1px;height:28.38px;line-height:28.38px;"><span class="lt">2021-09-24 23:39:14</span></div>
<div class="td" style="left:830.3px;top:618.96px;width:110.1px;height:28.38px;line-height:28.38px;">无</div>
<div class="td" style="left:940.4px;top:618.96px;width:63.7px;height:28.38px;line-height:28.38px;">支付宝扫码</div>
<div class="td" style="left:1004.1px;top:618.96px;width:88.3px;height:28.38px;line-height:28.38px;font-size:9.6px"><span class="dot" style="background:#6a64a0"></span><span style="color:#666">未支付</span></div>
<div class="td" style="left:1092.4px;top:618.96px;width:60.2px;height:28.38px;line-height:28.38px;">王三是</div>
<div class="td" style="left:1152.6px;top:618.96px;width:55.1px;height:28.38px;line-height:28.38px;color:#777">不是</div>
<div class="td" style="left:1207.7px;top:618.96px;width:55.8px;height:28.38px;line-height:28.38px;"><span class="lt">127.0.0.1</span></div>
<div class="nbtn" style="left:1272.2px;top:625.06px;background:#3d9ae0"><svg width="8" height="8" viewBox="0 0 8 8" style="position:absolute;left:4.8px;top:4.2px"><rect x="0" y="0" width="8" height="8" rx="1" fill="#fff"/><circle cx="4" cy="3.2" r="1.4" fill="#3d9ae0"/><path d="M1.6 7a2.4 2 0 0 1 4.8 0z" fill="#3d9ae0"/></svg><span style="position:absolute;left:14.4px;top:0">补单</span></div>
<div class="ebtn" style="left:1312.2px;top:625.06px"><svg width="16" height="16" viewBox="0 0 16 16"><path d="M6.1 10.1L10.6 5.6" stroke="#fff" stroke-width="2.7"/><path d="M4.3 11.9l0.7-2.9 2.2 2.2z" fill="#fff"/></svg></div>
<div class="cbx" style="left:196.4px;top:655.34px"></div>
<div class="td" style="left:214.5px;top:647.34px;width:24.5px;height:28.38px;line-height:28.38px;"><span class="lt">30</span></div>
<div class="td" style="left:239px;top:647.34px;width:54.5px;height:28.38px;line-height:28.38px;"><span class="lt">10001</span></div>
<div class="td" style="left:293.5px;top:647.34px;width:128.2px;height:28.38px;line-height:28.38px;"><span class="lt">20210924233851989897</span></div>
<div class="td" style="left:421.7px;top:647.34px;width:142.9px;height:28.38px;line-height:28.38px;"><span class="lt">sd102532213</span></div>
<div class="td" style="left:564.6px;top:647.34px;width:55.7px;height:28.38px;line-height:28.38px;"><span class="lt">1.0000</span></div>
<div class="td" style="left:620.3px;top:647.34px;width:57.1px;height:28.38px;line-height:28.38px;"><span class="lt">1.0000</span></div>
<div class="td" style="left:677.4px;top:647.34px;width:43.8px;height:28.38px;line-height:28.38px;"><span class="lt">0.0330</span></div>
<div class="td" style="left:721.2px;top:647.34px;width:109.1px;height:28.38px;line-height:28.38px;"><span class="lt">2021-09-24 23:38:51</span></div>
<div class="td" style="left:830.3px;top:647.34px;width:110.1px;height:28.38px;line-height:28.38px;">无</div>
<div class="td" style="left:940.4px;top:647.34px;width:63.7px;height:28.38px;line-height:28.38px;">支付宝扫码</div>
<div class="td" style="left:1004.1px;top:647.34px;width:88.3px;height:28.38px;line-height:28.38px;font-size:9.6px"><span class="dot" style="background:#6a64a0"></span><span style="color:#666">未支付</span></div>
<div class="td" style="left:1092.4px;top:647.34px;width:60.2px;height:28.38px;line-height:28.38px;">王三是</div>
<div class="td" style="left:1152.6px;top:647.34px;width:55.1px;height:28.38px;line-height:28.38px;color:#777">不是</div>
<div class="td" style="left:1207.7px;top:647.34px;width:55.8px;height:28.38px;line-height:28.38px;"><span class="lt">127.0.0.1</span></div>
<div class="nbtn" style="left:1272.2px;top:653.44px;background:#3d9ae0"><svg width="8" height="8" viewBox="0 0 8 8" style="position:absolute;left:4.8px;top:4.2px"><rect x="0" y="0" width="8" height="8" rx="1" fill="#fff"/><circle cx="4" cy="3.2" r="1.4" fill="#3d9ae0"/><path d="M1.6 7a2.4 2 0 0 1 4.8 0z" fill="#3d9ae0"/></svg><span style="position:absolute;left:14.4px;top:0">补单</span></div>
<div class="ebtn" style="left:1312.2px;top:653.44px"><svg width="16" height="16" viewBox="0 0 16 16"><path d="M6.1 10.1L10.6 5.6" stroke="#fff" stroke-width="2.7"/><path d="M4.3 11.9l0.7-2.9 2.2 2.2z" fill="#fff"/></svg></div>
<div class="cbx" style="left:196.4px;top:683.72px"></div>
<div class="td" style="left:214.5px;top:675.72px;width:24.5px;height:28.38px;line-height:28.38px;"><span class="lt">29</span></div>
<div class="td" style="left:239px;top:675.72px;width:54.5px;height:28.38px;line-height:28.38px;"><span class="lt">10001</span></div>
<div class="td" style="left:293.5px;top:675.72px;width:128.2px;height:28.38px;line-height:28.38px;"><span class="lt">20210924233805100519</span></div>
<div class="td" style="left:421.7px;top:675.72px;width:142.9px;height:28.38px;line-height:28.38px;"><span class="lt">sd10253221</span></div>
<div class="td" style="left:564.6px;top:675.72px;width:55.7px;height:28.38px;line-height:28.38px;"><span class="lt">1.0000</span></div>
<div class="td" style="left:620.3px;top:675.72px;width:57.1px;height:28.38px;line-height:28.38px;"><span class="lt">1.0000</span></div>
<div class="td" style="left:677.4px;top:675.72px;width:43.8px;height:28.38px;line-height:28.38px;"><span class="lt">0.0000</span></div>
<div class="td" style="left:721.2px;top:675.72px;width:109.1px;height:28.38px;line-height:28.38px;"><span class="lt">2021-09-24 23:38:05</span></div>
<div class="td" style="left:830.3px;top:675.72px;width:110.1px;height:28.38px;line-height:28.38px;">无</div>
<div class="td" style="left:940.4px;top:675.72px;width:63.7px;height:28.38px;line-height:28.38px;">支付宝扫码</div>
<div class="td" style="left:1004.1px;top:675.72px;width:88.3px;height:28.38px;line-height:28.38px;font-size:9.6px"><span class="dot" style="background:#6a64a0"></span><span style="color:#666">未支付</span></div>
<div class="td" style="left:1092.4px;top:675.72px;width:60.2px;height:28.38px;line-height:28.38px;">王三是</div>
<div class="td" style="left:1152.6px;top:675.72px;width:55.1px;height:28.38px;line-height:28.38px;color:#777">不是</div>
<div class="td" style="left:1207.7px;top:675.72px;width:55.8px;height:28.38px;line-height:28.38px;"><span class="lt">127.0.0.1</span></div>
<div class="nbtn" style="left:1272.2px;top:681.82px;background:#3d9ae0"><svg width="8" height="8" viewBox="0 0 8 8" style="position:absolute;left:4.8px;top:4.2px"><rect x="0" y="0" width="8" height="8" rx="1" fill="#fff"/><circle cx="4" cy="3.2" r="1.4" fill="#3d9ae0"/><path d="M1.6 7a2.4 2 0 0 1 4.8 0z" fill="#3d9ae0"/></svg><span style="position:absolute;left:14.4px;top:0">补单</span></div>
<div class="ebtn" style="left:1312.2px;top:681.82px"><svg width="16" height="16" viewBox="0 0 16 16"><path d="M6.1 10.1L10.6 5.6" stroke="#fff" stroke-width="2.7"/><path d="M4.3 11.9l0.7-2.9 2.2 2.2z" fill="#fff"/></svg></div>
<div class="cbx" style="left:196.4px;top:712.10px"></div>
<div class="td" style="left:214.5px;top:704.10px;width:24.5px;height:28.38px;line-height:28.38px;"><span class="lt">28</span></div>
<div class="td" style="left:239px;top:704.10px;width:54.5px;height:28.38px;line-height:28.38px;"><span class="lt">10001</span></div>
<div class="td" style="left:293.5px;top:704.10px;width:128.2px;height:28.38px;line-height:28.38px;"><span class="lt">20210910225334101999</span></div>
<div class="td" style="left:421.7px;top:704.10px;width:142.9px;height:28.38px;line-height:28.38px;"><span class="lt">Test2021091052238</span></div>
<div class="td" style="left:564.6px;top:704.10px;width:55.7px;height:28.38px;line-height:28.38px;"><span class="lt">10.0000</span></div>
<div class="td" style="left:620.3px;top:704.10px;width:57.1px;height:28.38px;line-height:28.38px;"><span class="lt">10.0000</span></div>
<div class="td" style="left:677.4px;top:704.10px;width:43.8px;height:28.38px;line-height:28.38px;"><span class="lt">0.2000</span></div>
<div class="td" style="left:721.2px;top:704.10px;width:109.1px;height:28.38px;line-height:28.38px;"><span class="lt">2021-09-10 22:53:34</span></div>
<div class="td" style="left:830.3px;top:704.10px;width:110.1px;height:28.38px;line-height:28.38px;">无</div>
<div class="td" style="left:940.4px;top:704.10px;width:63.7px;height:28.38px;line-height:28.38px;">微信免签</div>
<div class="td" style="left:1004.1px;top:704.10px;width:88.3px;height:28.38px;line-height:28.38px;font-size:9.6px"><span class="dot" style="background:#6a64a0"></span><span style="color:#666">未支付</span></div>
<div class="td" style="left:1092.4px;top:704.10px;width:60.2px;height:28.38px;line-height:28.38px;">王三</div>
<div class="td" style="left:1152.6px;top:704.10px;width:55.1px;height:28.38px;line-height:28.38px;color:#777">不是</div>
<div class="td" style="left:1207.7px;top:704.10px;width:55.8px;height:28.38px;line-height:28.38px;"><span class="lt">127.0.0.1</span></div>
<div class="nbtn" style="left:1272.2px;top:710.20px;background:#3d9ae0"><svg width="8" height="8" viewBox="0 0 8 8" style="position:absolute;left:4.8px;top:4.2px"><rect x="0" y="0" width="8" height="8" rx="1" fill="#fff"/><circle cx="4" cy="3.2" r="1.4" fill="#3d9ae0"/><path d="M1.6 7a2.4 2 0 0 1 4.8 0z" fill="#3d9ae0"/></svg><span style="position:absolute;left:14.4px;top:0">补单</span></div>
<div class="ebtn" style="left:1312.2px;top:710.20px"><svg width="16" height="16" viewBox="0 0 16 16"><path d="M6.1 10.1L10.6 5.6" stroke="#fff" stroke-width="2.7"/><path d="M4.3 11.9l0.7-2.9 2.2 2.2z" fill="#fff"/></svg></div>
<div class="cbx" style="left:196.4px;top:740.48px"></div>
<div class="td" style="left:214.5px;top:732.48px;width:24.5px;height:28.38px;line-height:28.38px;"><span class="lt">27</span></div>
<div class="td" style="left:239px;top:732.48px;width:54.5px;height:28.38px;line-height:28.38px;"><span class="lt">10001</span></div>
<div class="td" style="left:293.5px;top:732.48px;width:128.2px;height:28.38px;line-height:28.38px;"><span class="lt">20210910214955515353</span></div>
<div class="td" style="left:421.7px;top:732.48px;width:142.9px;height:28.38px;line-height:28.38px;"><span class="lt">CS20210910214950836365</span></div>
<div class="td" style="left:564.6px;top:732.48px;width:55.7px;height:28.38px;line-height:28.38px;"><span class="lt">100.0000</span></div>
<div class="td" style="left:620.3px;top:732.48px;width:57.1px;height:28.38px;line-height:28.38px;"><span class="lt">100.0000</span></div>
<div class="td" style="left:677.4px;top:732.48px;width:43.8px;height:28.38px;line-height:28.38px;"><span class="lt">2.0000</span></div>
<div class="td" style="left:721.2px;top:732.48px;width:109.1px;height:28.38px;line-height:28.38px;"><span class="lt">2021-09-10 21:49:55</span></div>
<div class="td" style="left:830.3px;top:732.48px;width:110.1px;height:28.38px;line-height:28.38px;"><span class="lt">2021-09-10 21:50:34</span></div>
<div class="td" style="left:940.4px;top:732.48px;width:63.7px;height:28.38px;line-height:28.38px;">微信免签</div>
<div class="td" style="left:1004.1px;top:732.48px;width:88.3px;height:28.38px;line-height:28.38px;font-size:9.6px"><span class="dot" style="background:#f39c12"></span><span style="color:#f39c12">已支付已返回</span></div>
<div class="td" style="left:1092.4px;top:732.48px;width:60.2px;height:28.38px;line-height:28.38px;">王三</div>
<div class="td" style="left:1152.6px;top:732.48px;width:55.1px;height:28.38px;line-height:28.38px;color:#7536d0">是</div>
<div class="td" style="left:1207.7px;top:732.48px;width:55.8px;height:28.38px;line-height:28.38px;"><span class="lt">127.0.0.1</span></div>
<div class="ebtn" style="left:1292px;top:738.58px"><svg width="16" height="16" viewBox="0 0 16 16"><path d="M6.1 10.1L10.6 5.6" stroke="#fff" stroke-width="2.7"/><path d="M4.3 11.9l0.7-2.9 2.2 2.2z" fill="#fff"/></svg></div>
<div class="cbx" style="left:196.4px;top:768.86px"></div>
<div class="td" style="left:214.5px;top:760.86px;width:24.5px;height:28.38px;line-height:28.38px;"><span class="lt">26</span></div>
<div class="td" style="left:239px;top:760.86px;width:54.5px;height:28.38px;line-height:28.38px;"><span class="lt">10001</span></div>
<div class="td" style="left:293.5px;top:760.86px;width:128.2px;height:28.38px;line-height:28.38px;"><span class="lt">20210910214801491005</span></div>
<div class="td" style="left:421.7px;top:760.86px;width:142.9px;height:28.38px;line-height:28.38px;"><span class="lt">CS20210910214759230637</span></div>
<div class="td" style="left:564.6px;top:760.86px;width:55.7px;height:28.38px;line-height:28.38px;"><span class="lt">10.0000</span></div>
<div class="td" style="left:620.3px;top:760.86px;width:57.1px;height:28.38px;line-height:28.38px;"><span class="lt">10.0000</span></div>
<div class="td" style="left:677.4px;top:760.86px;width:43.8px;height:28.38px;line-height:28.38px;"><span class="lt">0.0000</span></div>
<div class="td" style="left:721.2px;top:760.86px;width:109.1px;height:28.38px;line-height:28.38px;"><span class="lt">2021-09-10 21:48:01</span></div>
<div class="td" style="left:830.3px;top:760.86px;width:110.1px;height:28.38px;line-height:28.38px;">无</div>
<div class="td" style="left:940.4px;top:760.86px;width:63.7px;height:28.38px;line-height:28.38px;">微信免签</div>
<div class="td" style="left:1004.1px;top:760.86px;width:88.3px;height:28.38px;line-height:28.38px;font-size:9.6px"><span class="dot" style="background:#6a64a0"></span><span style="color:#666">未支付</span></div>
<div class="td" style="left:1092.4px;top:760.86px;width:60.2px;height:28.38px;line-height:28.38px;">王三</div>
<div class="td" style="left:1152.6px;top:760.86px;width:55.1px;height:28.38px;line-height:28.38px;color:#777">不是</div>
<div class="td" style="left:1207.7px;top:760.86px;width:55.8px;height:28.38px;line-height:28.38px;"><span class="lt">127.0.0.1</span></div>
<div class="nbtn" style="left:1272.2px;top:766.96px;background:#3d9ae0"><svg width="8" height="8" viewBox="0 0 8 8" style="position:absolute;left:4.8px;top:4.2px"><rect x="0" y="0" width="8" height="8" rx="1" fill="#fff"/><circle cx="4" cy="3.2" r="1.4" fill="#3d9ae0"/><path d="M1.6 7a2.4 2 0 0 1 4.8 0z" fill="#3d9ae0"/></svg><span style="position:absolute;left:14.4px;top:0">补单</span></div>
<div class="ebtn" style="left:1312.2px;top:766.96px"><svg width="16" height="16" viewBox="0 0 16 16"><path d="M6.1 10.1L10.6 5.6" stroke="#fff" stroke-width="2.7"/><path d="M4.3 11.9l0.7-2.9 2.2 2.2z" fill="#fff"/></svg></div>
<div class="cbx" style="left:196.4px;top:797.24px"></div>
<div class="td" style="left:214.5px;top:789.24px;width:24.5px;height:28.38px;line-height:28.38px;"><span class="lt">25</span></div>
<div class="td" style="left:239px;top:789.24px;width:54.5px;height:28.38px;line-height:28.38px;"><span class="lt">10001</span></div>
<div class="td" style="left:293.5px;top:789.24px;width:128.2px;height:28.38px;line-height:28.38px;"><span class="lt">20210910214733535751</span></div>
<div class="td" style="left:421.7px;top:789.24px;width:142.9px;height:28.38px;line-height:28.38px;"><span class="lt">CS20210910214133413773</span></div>
<div class="td" style="left:564.6px;top:789.24px;width:55.7px;height:28.38px;line-height:28.38px;"><span class="lt">10.0000</span></div>
<div class="td" style="left:620.3px;top:789.24px;width:57.1px;height:28.38px;line-height:28.38px;"><span class="lt">10.0000</span></div>
<div class="td" style="left:677.4px;top:789.24px;width:43.8px;height:28.38px;line-height:28.38px;"><span class="lt">0.0000</span></div>
<div class="td" style="left:721.2px;top:789.24px;width:109.1px;height:28.38px;line-height:28.38px;"><span class="lt">2021-09-10 21:47:33</span></div>
<div class="td" style="left:830.3px;top:789.24px;width:110.1px;height:28.38px;line-height:28.38px;">无</div>
<div class="td" style="left:940.4px;top:789.24px;width:63.7px;height:28.38px;line-height:28.38px;">微信免签</div>
<div class="td" style="left:1004.1px;top:789.24px;width:88.3px;height:28.38px;line-height:28.38px;font-size:9.6px"><span class="dot" style="background:#6a64a0"></span><span style="color:#666">未支付</span></div>
<div class="td" style="left:1092.4px;top:789.24px;width:60.2px;height:28.38px;line-height:28.38px;">王三</div>
<div class="td" style="left:1152.6px;top:789.24px;width:55.1px;height:28.38px;line-height:28.38px;color:#777">不是</div>
<div class="td" style="left:1207.7px;top:789.24px;width:55.8px;height:28.38px;line-height:28.38px;"><span class="lt">127.0.0.1</span></div>
<div class="nbtn" style="left:1272.2px;top:795.34px;background:#3d9ae0"><svg width="8" height="8" viewBox="0 0 8 8" style="position:absolute;left:4.8px;top:4.2px"><rect x="0" y="0" width="8" height="8" rx="1" fill="#fff"/><circle cx="4" cy="3.2" r="1.4" fill="#3d9ae0"/><path d="M1.6 7a2.4 2 0 0 1 4.8 0z" fill="#3d9ae0"/></svg><span style="position:absolute;left:14.4px;top:0">补单</span></div>
<div class="ebtn" style="left:1312.2px;top:795.34px"><svg width="16" height="16" viewBox="0 0 16 16"><path d="M6.1 10.1L10.6 5.6" stroke="#fff" stroke-width="2.7"/><path d="M4.3 11.9l0.7-2.9 2.2 2.2z" fill="#fff"/></svg></div>
<div class="cbx" style="left:196.4px;top:825.62px"></div>
<div class="td" style="left:214.5px;top:817.62px;width:24.5px;height:28.38px;line-height:28.38px;"><span class="lt">24</span></div>
<div class="td" style="left:239px;top:817.62px;width:54.5px;height:28.38px;line-height:28.38px;"><span class="lt">10001</span></div>
<div class="td" style="left:293.5px;top:817.62px;width:128.2px;height:28.38px;line-height:28.38px;"><span class="lt">20210908195041499948</span></div>
<div class="td" style="left:421.7px;top:817.62px;width:142.9px;height:28.38px;line-height:28.38px;"><span class="lt">Test2021090848342</span></div>
<div class="td" style="left:564.6px;top:817.62px;width:55.7px;height:28.38px;line-height:28.38px;"><span class="lt">10.0000</span></div>
<div class="td" style="left:620.3px;top:817.62px;width:57.1px;height:28.38px;line-height:28.38px;"><span class="lt">10.0000</span></div>
<div class="td" style="left:677.4px;top:817.62px;width:43.8px;height:28.38px;line-height:28.38px;"><span class="lt">0.1500</span></div>
<div class="td" style="left:721.2px;top:817.62px;width:109.1px;height:28.38px;line-height:28.38px;"><span class="lt">2021-09-08 19:50:41</span></div>
<div class="td" style="left:830.3px;top:817.62px;width:110.1px;height:28.38px;line-height:28.38px;"><span class="lt">2021-09-10 15:13:57</span></div>
<div class="td" style="left:940.4px;top:817.62px;width:63.7px;height:28.38px;line-height:28.38px;">银行卡</div>
<div class="td" style="left:1004.1px;top:817.62px;width:88.3px;height:28.38px;line-height:28.38px;font-size:9.6px"><span class="dot" style="background:#f39c12"></span><span style="color:#f39c12">已支付已返回</span></div>
<div class="td" style="left:1092.4px;top:817.62px;width:60.2px;height:28.38px;line-height:28.38px;">系统账户1</div>
<div class="td" style="left:1152.6px;top:817.62px;width:55.1px;height:28.38px;line-height:28.38px;color:#7536d0">是</div>
<div class="td" style="left:1207.7px;top:817.62px;width:55.8px;height:28.38px;line-height:28.38px;"><span class="lt">127.0.0.1</span></div>
<div class="ebtn" style="left:1292px;top:823.72px"><svg width="16" height="16" viewBox="0 0 16 16"><path d="M6.1 10.1L10.6 5.6" stroke="#fff" stroke-width="2.7"/><path d="M4.3 11.9l0.7-2.9 2.2 2.2z" fill="#fff"/></svg></div>
<div class="abs" style="left:188px;top:855.7px;height:22.7px;line-height:22.7px;font-size:9.4px;letter-spacing:0.3px;color:#333;white-space:nowrap">显示第 1 到第 10 条记录，总共 33 条记录 每页显示</div>
<div class="abs" style="left:406px;top:855.2px;width:36.5px;height:22.7px;border:1px solid #ddd;background:#f4f4f4;border-radius:2.5px;font-size:8.64px;line-height:20.7px;padding-left:9.5px;color:#333">10 <svg width="6" height="4" viewBox="0 0 6 4" style="vertical-align:1px"><path d="M0 3.6L3 0.4 6 3.6z" fill="#333"/></svg></div>
<div class="abs" style="left:445.5px;top:855.7px;height:22.7px;line-height:22.7px;font-size:9.4px;color:#333">条记录</div>
<div class="abs" style="left:1069.2px;top:854.2px;width:187.6px;height:22.7px;border:1px solid #ddd;background:#fafafa;border-radius:3px"></div>
<div class="abs" style="left:1069.2px;top:854.2px;width:46.9px;height:22.7px;color:#555;text-align:center;line-height:22.7px;font-size:9.4px">上一页</div>
<div class="abs" style="left:1116.1px;top:854.2px;width:23.9px;height:22.7px;background:#6b62a0;color:#fff;text-align:center;line-height:22.7px;font-size:9.4px">1</div>
<div class="abs" style="left:1140px;top:854.2px;width:23.5px;height:22.7px;color:#555;text-align:center;line-height:22.7px;font-size:9.4px">2</div>
<div class="abs" style="left:1139.5px;top:854.2px;width:1px;height:22.7px;background:#e3e3e3"></div>
<div class="abs" style="left:1163.5px;top:854.2px;width:23.2px;height:22.7px;color:#555;text-align:center;line-height:22.7px;font-size:9.4px">3</div>
<div class="abs" style="left:1163.0px;top:854.2px;width:1px;height:22.7px;background:#e3e3e3"></div>
<div class="abs" style="left:1186.7px;top:854.2px;width:23.7px;height:22.7px;color:#555;text-align:center;line-height:22.7px;font-size:9.4px">4</div>
<div class="abs" style="left:1186.2px;top:854.2px;width:1px;height:22.7px;background:#e3e3e3"></div>
<div class="abs" style="left:1210.4px;top:854.2px;width:46.4px;height:22.7px;color:#555;text-align:center;line-height:22.7px;font-size:9.4px">下一页</div>
<div class="abs" style="left:1209.9px;top:854.2px;width:1px;height:22.7px;background:#e3e3e3"></div>
<div class="abs" style="left:1261px;top:854px;width:36px;height:22.6px;border:1px solid #d2d6de;background:#fff"></div>
<div class="abs" style="left:1301px;top:855.5px;width:35.8px;height:21.5px;border:1px solid #ddd;background:#f4f4f4;border-radius:3px;text-align:center;line-height:19.5px;font-size:8.64px;color:#333">跳转</div>
<!--CONTENT_END-->
</body></html>
